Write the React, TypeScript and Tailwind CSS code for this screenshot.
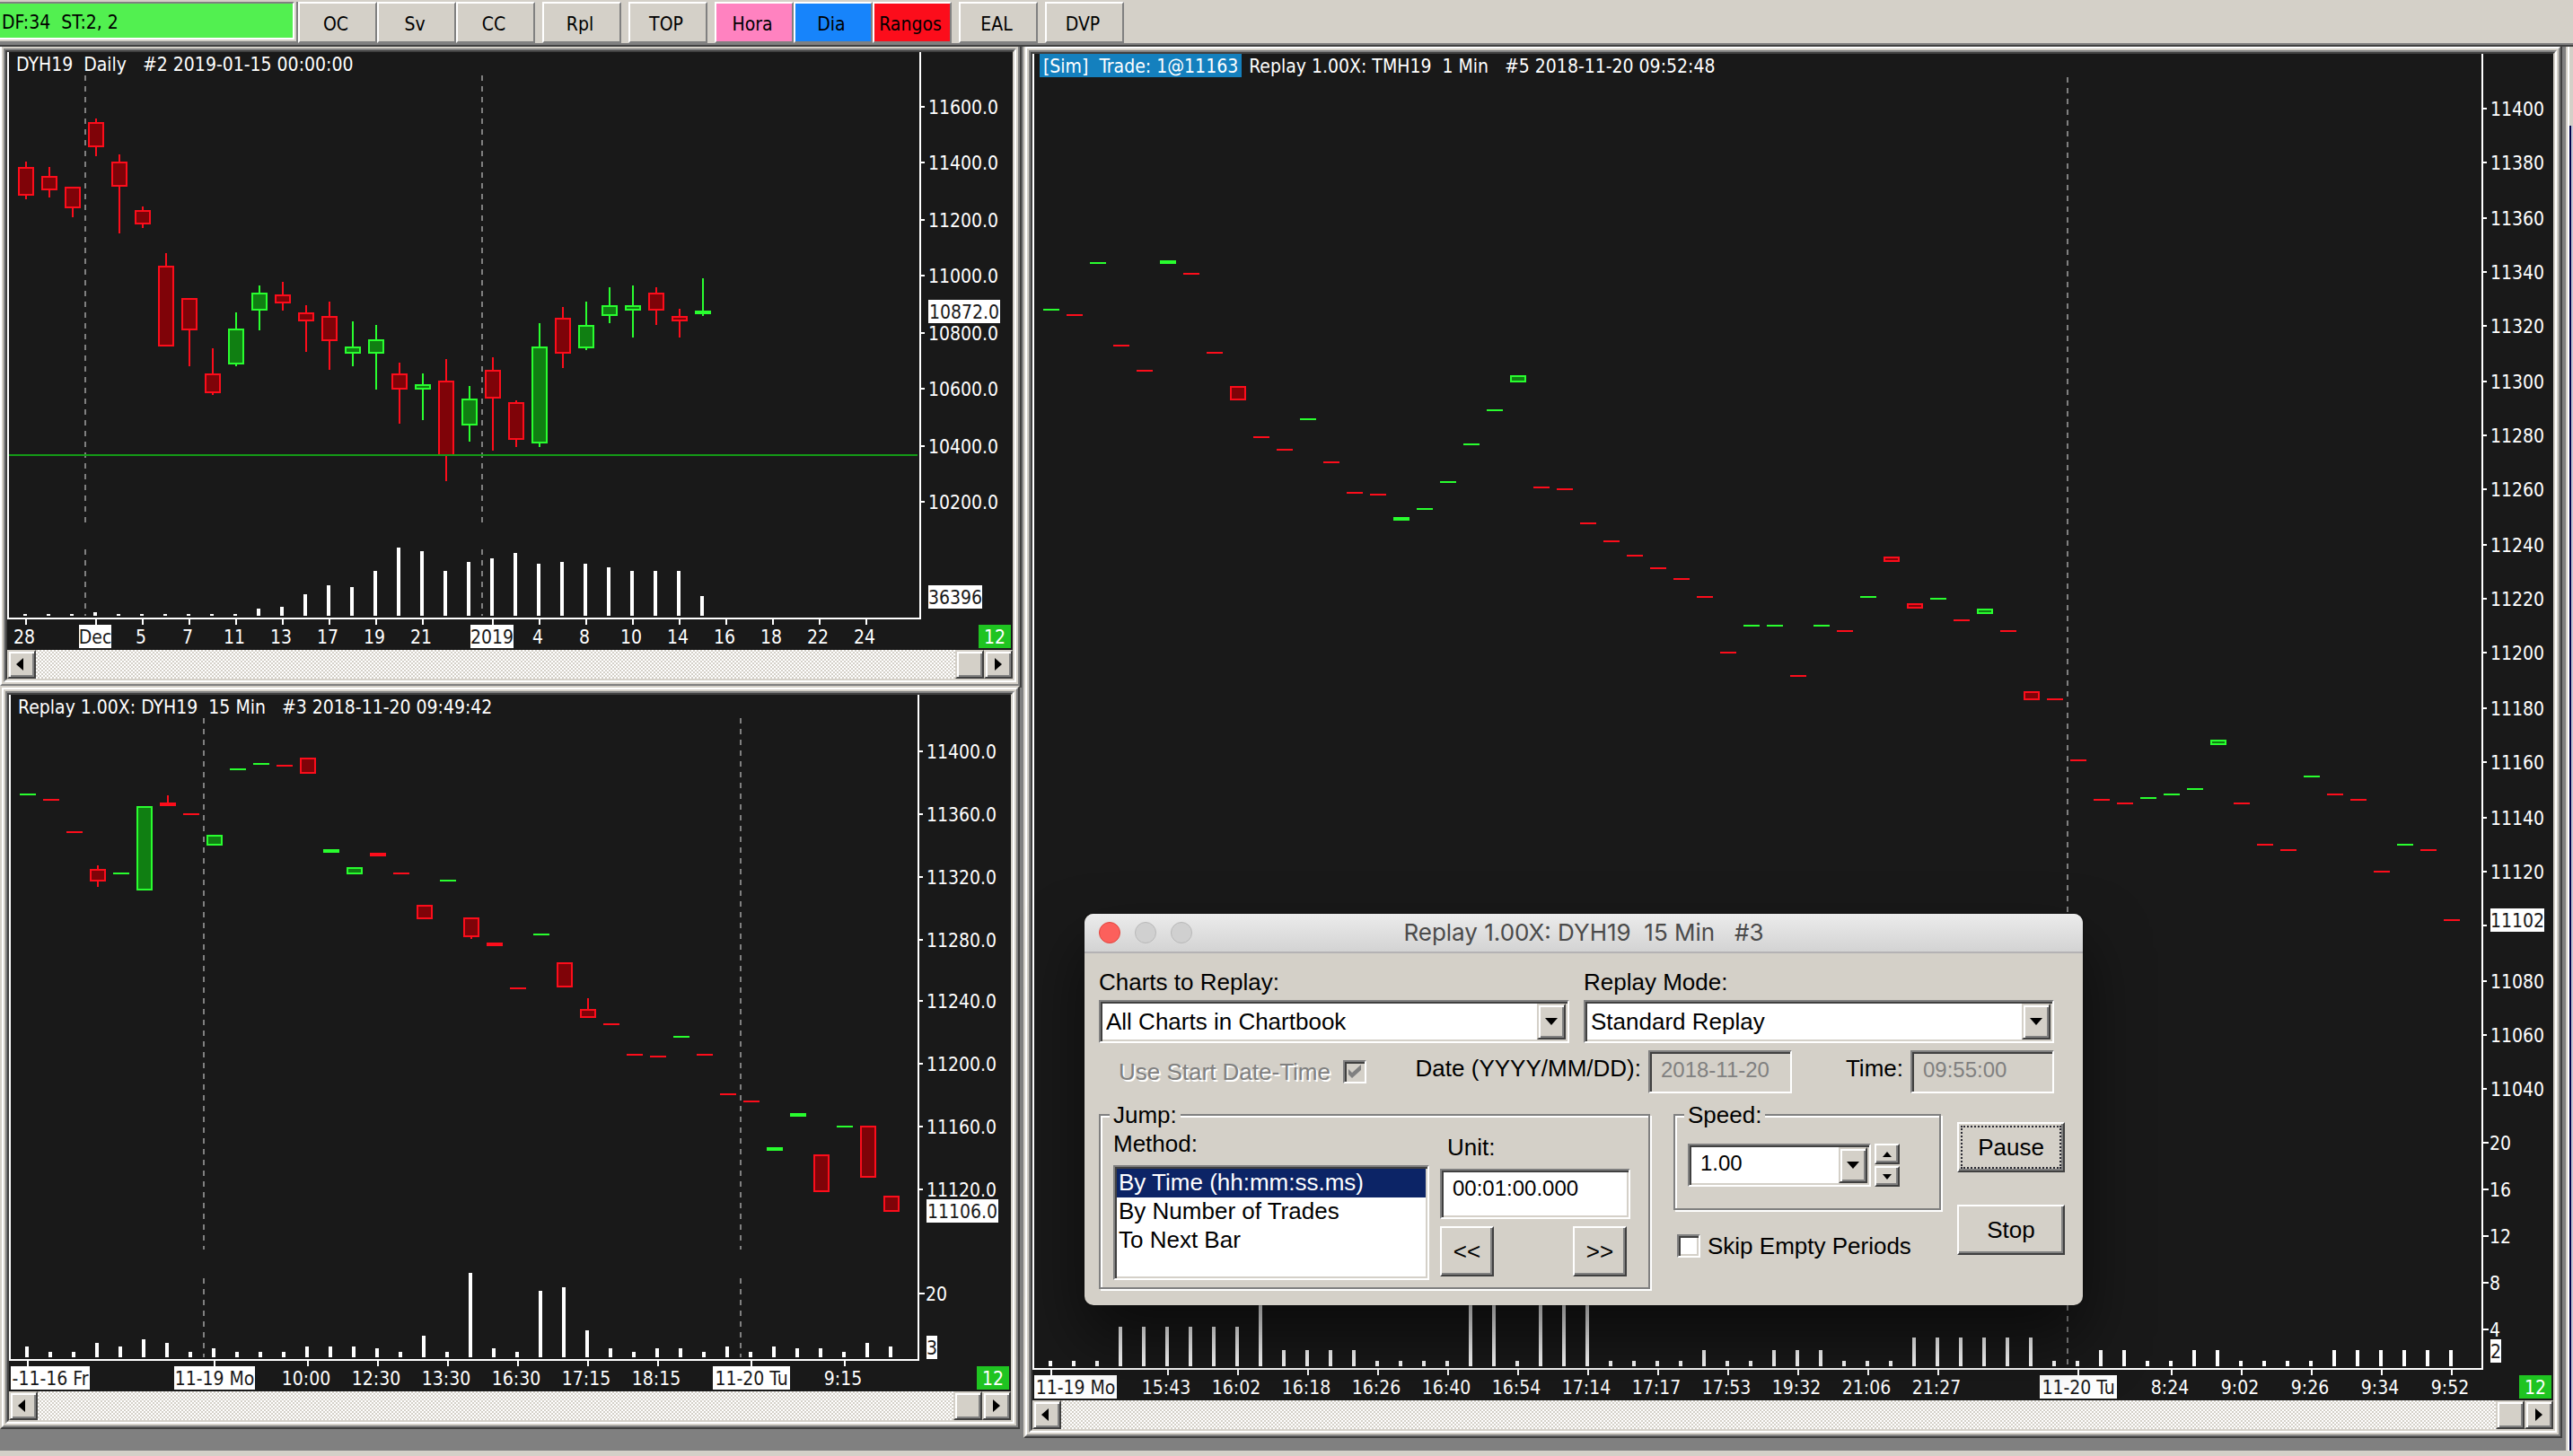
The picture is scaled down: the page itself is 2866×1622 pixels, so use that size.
import { ReactNode } from 'react'

type Candle = {
  up: boolean
  top: number
  bottom: number
  high?: number
  low?: number
}
type Label = { at: number; text: string; box?: [number, number] }
type ChartProps = {
  view: [number, number, number, number]
  candles: Candle[]
  first: number
  volumes: number[]
  axisX: number
  axisY: number
  dashes: [number, number, number][]
  prices: Label[]
  volumeTicks: Label[]
  priceBox: Label
  volumeBox: Label
  times: Label[]
  line?: number
  zoomBox: number
  name: string
}

const STEP = 26
const chartFont = "font-['DejaVu_Sans_Condensed','DejaVu_Sans',sans-serif] text-[21px]"
const dialogFont = "font-['Liberation_Sans',Arial,sans-serif]"

// win95 style bevels
const raised =
  'border-2 border-t-white border-l-white border-r-[#404040] border-b-[#404040] bg-[#d4d0c8] shadow-[inset_-2px_-2px_0_#808080]'
const raisedSoft =
  'border-2 border-t-[#d4d0c8] border-l-[#d4d0c8] border-r-[#404040] border-b-[#404040] bg-[#d4d0c8] shadow-[inset_2px_2px_0_#fff,inset_-2px_-2px_0_#808080]'
const sunken =
  'border-2 border-t-[#808080] border-l-[#808080] border-r-white border-b-white shadow-[inset_2px_2px_0_#404040,inset_-2px_-2px_0_#d4d0c8]'
const etched = 'border-2 border-[#808080] shadow-[2px_2px_0_#fff,inset_2px_2px_0_#fff]'

// body top, body bottom, high, low
const up = (top: number, bottom = top + 2, high?: number, low?: number): Candle => ({ up: true, top, bottom, high, low })
const dn = (top: number, bottom = top + 2, high?: number, low?: number): Candle => ({ up: false, top, bottom, high, low })

const daily: ChartProps = {
  name: 'DYH19 Daily',
  view: [8, 58, 1120, 666],
  first: 29,
  axisX: 1025,
  axisY: 689,
  line: 507,
  zoomBox: 1090,
  candles: [
    dn(186, 218, 180, 222), dn(196, 212, 186, 220), dn(208, 232, 208, 242), dn(136, 164, 132, 174),
    dn(180, 208, 172, 260), dn(234, 250, 230, 254), dn(296, 386, 282), dn(332, 368, 332, 408),
    dn(416, 438, 388, 440), up(366, 406, 348, 408), up(326, 346, 318, 368), dn(328, 338, 314, 346),
    dn(348, 358, 340, 392), dn(352, 380, 336, 412), up(386, 394, 358, 408), up(378, 394, 362, 434),
    dn(416, 434, 404, 472), up(428, 434, 416, 468), dn(424, 508, 400, 536), up(444, 474, 430, 492),
    dn(412, 444, 398, 502), dn(448, 490, 446, 498), up(386, 494, 360, 498), dn(354, 394, 342, 410),
    up(362, 388, 336, 390), up(340, 352, 320, 360), up(340, 346, 318, 376), dn(326, 346, 320, 362),
    dn(352, 358, 344, 376), up(346, 350, 310, 352),
  ],
  volumes: [
    684, 684, 684, 682, 684, 684, 684, 684, 684, 684, 678, 676, 662, 652, 654, 636, 610, 614, 636, 626, 622, 616, 628,
    626, 628, 632, 636, 636, 636, 664,
  ],
  dashes: [[95, 84, 582], [95, 612, 686], [537, 84, 582], [537, 612, 686]],
  prices: [
    { at: 119, text: '11600.0' }, { at: 181, text: '11400.0' }, { at: 245, text: '11200.0' }, { at: 307, text: '11000.0' },
    { at: 371, text: '10800.0' }, { at: 433, text: '10600.0' }, { at: 497, text: '10400.0' }, { at: 559, text: '10200.0' },
  ],
  volumeTicks: [],
  priceBox: { at: 334, text: '10872.0', box: [1034, 80] },
  volumeBox: { at: 652, text: '36396', box: [1034, 60] },
  times: [
    { at: 29, text: '28' }, { at: 107, text: 'Dec', box: [88, 36] }, { at: 159, text: '5' }, { at: 211, text: '7' },
    { at: 263, text: '11' }, { at: 315, text: '13' }, { at: 367, text: '17' }, { at: 419, text: '19' },
    { at: 471, text: '21' }, { at: 549, text: '2019', box: [524, 48] }, { at: 601, text: '4' }, { at: 653, text: '8' },
    { at: 705, text: '10' }, { at: 757, text: '14' }, { at: 809, text: '16' }, { at: 861, text: '18' },
    { at: 913, text: '22' }, { at: 965, text: '24' },
  ],
}

const quarter: ChartProps = {
  name: 'DYH19 15 Min',
  view: [10, 774, 1116, 776],
  first: 31,
  axisX: 1023,
  axisY: 1515,
  zoomBox: 1088,
  candles: [
    up(884), dn(890), dn(926), dn(968, 982, 964, 988), up(972), up(898, 992), dn(894, 898, 886), dn(906),
    up(930, 942), up(856), up(850), dn(852), dn(844, 862), up(946, 950), up(966, 974), dn(950, 954),
    dn(972), dn(1008, 1024), up(980), dn(1022, 1044, 1022, 1046), dn(1050, 1054), dn(1100), up(1040),
    dn(1072, 1100), dn(1124, 1134, 1112), dn(1140), dn(1174), dn(1176), up(1154), dn(1174), dn(1218), dn(1226),
    up(1278, 1282), up(1240, 1244), dn(1286, 1328), up(1254), dn(1254, 1312), dn(1332, 1350),
  ],
  volumes: [
    1500, 1506, 1506, 1496, 1500, 1492, 1496, 1506, 1502, 1506, 1506, 1506, 1500, 1500, 1500, 1502, 1506, 1488, 1506,
    1418, 1502, 1506, 1438, 1434, 1482, 1502, 1506, 1502, 1502, 1506, 1500, 1506, 1500, 1502, 1502, 1506, 1496, 1500,
  ],
  dashes: [[227, 800, 1392], [227, 1424, 1512], [825, 800, 1392], [825, 1424, 1512]],
  prices: [
    { at: 837, text: '11400.0' }, { at: 907, text: '11360.0' }, { at: 977, text: '11320.0' }, { at: 1047, text: '11280.0' },
    { at: 1115, text: '11240.0' }, { at: 1185, text: '11200.0' }, { at: 1255, text: '11160.0' }, { at: 1325, text: '11120.0' },
  ],
  volumeTicks: [{ at: 1441, text: '20' }],
  priceBox: { at: 1336, text: '11106.0', box: [1032, 80] },
  volumeBox: { at: 1488, text: '3', box: [1032, 12] },
  times: [
    { at: 31, text: '-11-16 Fr', box: [12, 88] }, { at: 239, text: '11-19 Mo', box: [194, 90] }, { at: 343, text: '10:00' },
    { at: 421, text: '12:30' }, { at: 499, text: '13:30' }, { at: 577, text: '16:30' }, { at: 655, text: '17:15' },
    { at: 733, text: '18:15' }, { at: 837, text: '11-20 Tu', box: [794, 86] }, { at: 941, text: '9:15' },
  ],
}

const minute: ChartProps = {
  name: 'TMH19 1 Min',
  view: [1150, 60, 1694, 1500],
  first: 1171,
  axisX: 2765,
  axisY: 1525,
  zoomBox: 2806,
  candles: [
    up(344), dn(350), up(292), dn(384), dn(412), up(290, 294), dn(304), dn(392), dn(430, 446), dn(486), dn(500),
    up(466), dn(514), dn(548), dn(550), up(576, 580), up(566), up(536), up(494), up(456), up(418, 426), dn(542),
    dn(544), dn(582), dn(602), dn(618), dn(632), dn(644), dn(664), dn(726), up(696), up(696), dn(752), up(696),
    dn(702), up(664), dn(620, 626), dn(672, 678), up(666), dn(690), up(678, 684), dn(702), dn(770, 780), dn(778),
    dn(846), dn(890), dn(894), up(888), up(884), up(878), up(824, 830), dn(894), dn(940), dn(946), up(864),
    dn(884), dn(890), dn(970), up(940), dn(946), dn(1024),
  ],
  volumes: [
    1516, 1516, 1516, 1478, 1478, 1478, 1478, 1478, 1478, 1440, 1504, 1504, 1504, 1504, 1516, 1516, 1516, 1516, 1440,
    1440, 1516, 1440, 1440, 1440, 1516, 1516, 1516, 1516, 1504, 1516, 1516, 1504, 1504, 1504, 1516, 1516, 1516, 1490,
    1490, 1490, 1490, 1490, 1490, 1516, 1516, 1504, 1504, 1516, 1516, 1504, 1504, 1516, 1516, 1516, 1516, 1504, 1504,
    1504, 1504, 1504, 1504,
  ],
  dashes: [[2303, 86, 1522]],
  prices: [
    { at: 121, text: '11400' }, { at: 181, text: '11380' }, { at: 243, text: '11360' }, { at: 303, text: '11340' },
    { at: 363, text: '11320' }, { at: 425, text: '11300' }, { at: 485, text: '11280' }, { at: 545, text: '11260' },
    { at: 607, text: '11240' }, { at: 667, text: '11220' }, { at: 727, text: '11200' }, { at: 789, text: '11180' },
    { at: 849, text: '11160' }, { at: 911, text: '11140' }, { at: 971, text: '11120' }, { at: 1031, text: '' },
    { at: 1093, text: '11080' }, { at: 1153, text: '11060' }, { at: 1213, text: '11040' },
  ],
  volumeTicks: [
    { at: 1273, text: '20' }, { at: 1325, text: '16' }, { at: 1377, text: '12' }, { at: 1429, text: '8' }, { at: 1481, text: '4' },
  ],
  priceBox: { at: 1012, text: '11102', box: [2774, 60] },
  volumeBox: { at: 1492, text: '2', box: [2774, 12] },
  times: [
    { at: 1171, text: '11-19 Mo', box: [1152, 92] }, { at: 1301, text: '15:43' }, { at: 1379, text: '16:02' },
    { at: 1457, text: '16:18' }, { at: 1535, text: '16:26' }, { at: 1613, text: '16:40' }, { at: 1691, text: '16:54' },
    { at: 1769, text: '17:14' }, { at: 1847, text: '17:17' }, { at: 1925, text: '17:53' }, { at: 2003, text: '19:32' },
    { at: 2081, text: '21:06' }, { at: 2159, text: '21:27' }, { at: 2315, text: '11-20 Tu', box: [2272, 86] },
    { at: 2419, text: '8:24' }, { at: 2497, text: '9:02' }, { at: 2575, text: '9:26' }, { at: 2653, text: '9:34' },
    { at: 2731, text: '9:52' },
  ],
}

function Tag({ x, y, width, text, green }: { x: number; y: number; width: number; text: string; green?: boolean }) {
  return (
    <g>
      <rect x={x} y={y} width={width} height={26} fill={green ? '#1fc421' : '#fff'} />
      <text x={x + width / 2} y={y + 21} textAnchor="middle" fill={green ? '#fff' : '#191919'}>{text}</text>
    </g>
  )
}

function Chart(c: ChartProps) {
  const [left, top] = c.view
  return (
    <svg viewBox={c.view.join(' ')} className={`block h-auto w-full bg-[#191919] ${chartFont}`} shapeRendering="crispEdges" role="img" aria-label={c.name}>
      {c.dashes.map(([x, y1, y2]) => (
        <line key={`${x}-${y1}`} x1={x} x2={x} y1={y1} y2={y2} stroke="#808080" strokeWidth={2} strokeDasharray="6 6" />
      ))}
      {c.candles.map((k, i) => {
        const x = c.first + i * STEP
        const stroke = k.up ? '#29fd2f' : '#fc0d1b'
        return (
          <g key={i}>
            <rect x={x - 1} y={k.high ?? k.top} width={2} height={(k.low ?? k.bottom) - (k.high ?? k.top)} fill={stroke} />
            <rect x={x - 9} y={k.top} width={18} height={k.bottom - k.top} fill={stroke} />
            {k.bottom - k.top > 4 && (
              <rect x={x - 7} y={k.top + 2} width={14} height={k.bottom - k.top - 4} fill={k.up ? '#107f12' : '#7f0308'} />
            )}
          </g>
        )
      })}
      {c.volumes.map((v, i) => (
        <rect key={i} x={c.first + i * STEP - 3} y={v} width={4} height={c.axisY - 3 - v} fill="#fff" />
      ))}
      {c.line && <rect x={left + 2} y={c.line - 1} width={c.axisX - left - 5} height={2} fill="#149a17" />}

      <path
        d={`M${left + 1} ${top}V${c.axisY}H${c.axisX}V${top}`}
        fill="none"
        stroke="#fff"
        strokeWidth={2}
      />
      <g fill="#fff">
        {c.prices.map((p) => (
          <g key={p.at}>
            <rect x={c.axisX + 1} y={p.at - 1} width={4} height={2} />
            <text x={c.axisX + 9} y={p.at + 8}>{p.text}</text>
          </g>
        ))}
        {c.volumeTicks.map((p) => (
          <g key={p.at}>
            <rect x={c.axisX + 1} y={p.at - 1} width={6} height={2} />
            <text x={c.axisX + 8} y={p.at + 8}>{p.text}</text>
          </g>
        ))}
        {c.times.map((t) => (
          <g key={t.at}>
            <rect x={t.at - 1} y={c.axisY + 1} width={2} height={6} />
            {!t.box && <text x={t.at - 2} y={c.axisY + 28} textAnchor="middle">{t.text}</text>}
          </g>
        ))}
      </g>
      {c.times.map((t) => t.box && <Tag key={t.at} x={t.box[0]} y={c.axisY + 7} width={t.box[1]} text={t.text} />)}
      {[c.priceBox, c.volumeBox].map((b) => b.box && <Tag key={b.at} x={b.box[0]} y={b.at} width={b.box[1]} text={b.text} />)}
      <Tag x={c.zoomBox} y={c.axisY + 7} width={36} text="12" green />
    </svg>
  )
}

function ScrollBar() {
  return (
    <div className="flex h-8 bg-[repeating-conic-gradient(#fff_0_25%,#d4d0c8_0_50%)] bg-[length:4px_4px]">
      <button aria-label="Scroll left" className={`flex w-8 items-center justify-center pr-1 ${raisedSoft}`}>
        <svg width="8" height="14" viewBox="0 0 8 14"><path d="M8 0v14L0 7z" /></svg>
      </button>
      <div className={`ml-auto w-8 ${raisedSoft}`} />
      <button aria-label="Scroll right" className={`flex w-8 items-center justify-center ${raisedSoft}`}>
        <svg width="8" height="14" viewBox="0 0 8 14"><path d="M0 0v14l8-7z" /></svg>
      </button>
    </div>
  )
}

function ChartWindow({ chart, title, className = '' }: { chart: ChartProps; title: ReactNode; className?: string }) {
  return (
    <section className={`border-2 border-t-[#d4d0c8] border-r-[#404040] border-b-[#404040] border-l-[#d4d0c8] ${className}`}>
      <div className="border-2 border-t-white border-r-[#808080] border-b-[#808080] border-l-white">
        <div className="border-2 border-[#d4d0c8]">
          <div className="border-2 border-t-[#808080] border-r-white border-b-white border-l-[#808080]">
            <div className="relative border-2 border-t-[#404040] border-r-[#d4d0c8] border-b-[#d4d0c8] border-l-[#404040]">
              <h2 className={`absolute top-0 left-2 flex h-[26px] whitespace-pre leading-[28px] text-white ${chartFont}`}>{title}</h2>
              <Chart {...chart} />
              <ScrollBar />
            </div>
          </div>
        </div>
      </div>
    </section>
  )
}

function ToolButton({ text, className = 'bg-[#d4d0c8]' }: { text: string; className?: string }) {
  return (
    <button className={`h-[46px] w-[88px] border-2 border-t-white border-r-[#808080] border-b-[#808080] border-l-white pt-1 pr-1 text-center leading-[26px] ${className}`}>
      {text}
    </button>
  )
}

function Toolbar() {
  return (
    <header className={`flex border-b-2 border-[#404040] bg-[#d4d0c8] text-black ${chartFont}`}>
      <div className="flex grow gap-2 border-b-2 border-[#808080] pt-0.5">
        <div className="flex">
          <div className="h-[46px] w-[332px] border-r-2 border-b-2 border-[#808080] pr-0.5 pb-0.5">
            <p className="h-full border-t-2 border-r-2 border-b-2 border-t-[#808080] border-r-white border-b-white bg-[#52f050] pt-2 pl-0.5 leading-[26px] whitespace-pre">
              {'DF:34  ST:2, 2'}
            </p>
          </div>
          <ToolButton text="OC" />
          <ToolButton text="Sv" />
          <ToolButton text="CC" />
        </div>
        <ToolButton text="Rpl" />
        <ToolButton text="TOP" />
        <div className="flex">
          <ToolButton text="Hora" className="bg-[#ff82c0]" />
          <ToolButton text="Dia" className="bg-[#1784fb]" />
          <ToolButton text="Rangos" className="bg-[#fc0d1b]" />
        </div>
        <ToolButton text="EAL" />
        <ToolButton text="DVP" />
      </div>
    </header>
  )
}

function Dropdown({ id, value, className = '' }: { id: string; value: string; className?: string }) {
  return (
    <div className="relative">
      <select id={id} className={`block h-12 w-full appearance-none bg-white pl-1.5 ${sunken} ${className}`}>
        <option>{value}</option>
      </select>
      <span className={`pointer-events-none absolute inset-y-1 right-1 flex w-8 items-center justify-center ${raisedSoft}`}>
        <svg width="14" height="8" viewBox="0 0 14 8"><path d="M0 0h14L7 8z" /></svg>
      </span>
    </div>
  )
}

function ReplayDialog() {
  return (
    <div
      role="dialog"
      aria-labelledby="dialog-title"
      className={`absolute top-[966px] left-[1208px] w-[1112px] overflow-hidden rounded-[10px] bg-[#d4d0c8] text-[26px] leading-8 text-black shadow-[0_36px_70px_rgba(0,0,0,0.55),0_0_2px_rgba(0,0,0,0.6)] ${dialogFont}`}
    >
      <div className="relative flex h-11 items-center gap-4 border-b-2 border-[#b4b2b4] bg-gradient-to-b from-[#ececec] to-[#d3d3d3] pl-4">
        <button aria-label="Close" className="size-6 rounded-full border border-[#e2463f] bg-[#fc605c]" />
        <button aria-label="Minimize" className="size-6 rounded-full border border-[#b9b9b9] bg-[#d0d0d0]" />
        <button aria-label="Zoom" className="size-6 rounded-full border border-[#b9b9b9] bg-[#d0d0d0]" />
        <h2 id="dialog-title" className="pointer-events-none absolute inset-x-0 text-center font-[Inter,Roboto,sans-serif] whitespace-pre text-[#4b4b4b]">
          {'Replay 1.00X: DYH19  15 Min   #3'}
        </h2>
      </div>

      <form className="pt-4 pb-[18px] pl-4">
        <div className="grid grid-cols-2 gap-4 pr-8">
          <div className="flex flex-col gap-1">
            <label htmlFor="charts">Charts to Replay:</label>
            <Dropdown id="charts" value="All Charts in Chartbook" />
          </div>
          <div className="flex flex-col gap-1">
            <label htmlFor="mode">Replay Mode:</label>
            <Dropdown id="mode" value="Standard Replay" />
          </div>
        </div>

        <div className="mt-2 flex h-12 items-center pr-8">
          <label htmlFor="use-start" className="ml-5.5 text-[#808080] [text-shadow:2px_2px_0_#fff]">Use Start Date-Time</label>
          <span className="relative ml-3.5 size-[26px]">
            <input id="use-start" type="checkbox" defaultChecked disabled className={`block size-full appearance-none ${sunken}`} />
            <svg className="pointer-events-none absolute inset-0" width="26" height="26" viewBox="0 0 26 26">
              <path d="M6 10v6l4 4 10-9V5l-10 9z" fill="#808080" />
            </svg>
          </span>
          <label htmlFor="date" className="ml-auto pb-2">Date (YYYY/MM/DD):</label>
          <input id="date" disabled defaultValue="2018-11-20" className={`ml-2 h-12 w-40 pl-3 pb-1 text-2xl text-[#808080] ${sunken}`} />
          <label htmlFor="time" className="ml-15 pb-2">Time:</label>
          <input id="time" disabled defaultValue="09:55:00" className={`ml-2 h-12 w-40 pl-3 pb-1 text-2xl text-[#808080] ${sunken}`} />
        </div>

        <div className="mt-2 flex">
          <fieldset className={`flex w-[614px] pb-2 pl-3.5 ${etched}`}>
            <legend className="bg-[#d4d0c8] px-1 -ml-1">Jump:</legend>
            <div className="flex gap-3">
              <div className="w-[352px]">
                <label htmlFor="method" className="block">Method:</label>
                <select id="method" size={4} defaultValue="time" className={`mt-2 block h-32 w-full appearance-none overflow-hidden bg-white p-0.5 ${sunken}`}>
                  <option value="time" className="h-8 p-0 pl-0.5 leading-8 checked:bg-[linear-gradient(#0c2466,#0c2466)] checked:[-webkit-text-fill-color:#fff]">By Time (hh:mm:ss.ms)</option>
                  <option value="trades" className="h-8 p-0 pl-0.5 leading-8">By Number of Trades</option>
                  <option value="bar" className="h-8 p-0 pl-0.5 leading-8">To Next Bar</option>
                </select>
              </div>
              <div className="w-[212px] pt-1">
                <label htmlFor="unit" className="block pl-2">Unit:</label>
                <input id="unit" defaultValue="00:01:00.000" className={`mt-2 block h-14 w-full bg-white pl-3 pb-3 text-2xl ${sunken}`} />
                <div className="mt-2 flex justify-between pr-1">
                  <button type="button" className={`h-14 w-15 ${raised}`}>&lt;&lt;</button>
                  <button type="button" className={`h-14 w-15 ${raised}`}>&gt;&gt;</button>
                </div>
              </div>
            </div>
          </fieldset>

          <div className="ml-[26px] w-[298px]">
            <fieldset className={`pb-6 pl-3.5 ${etched}`}>
              <legend className="bg-[#d4d0c8] px-1 -ml-1">
                <label htmlFor="speed">Speed:</label>
              </legend>
              <div className="mt-4 flex gap-1">
                <div className="w-[204px]">
                  <Dropdown id="speed" value="1.00" className="pb-1 pl-3 text-2xl" />
                </div>
                <div className="flex w-7 flex-col gap-0.5">
                  <button type="button" aria-label="Faster" className={`flex h-[23px] items-center justify-center ${raised}`}>
                    <svg width="10" height="6" viewBox="0 0 10 6"><path d="M5 0l5 6H0z" /></svg>
                  </button>
                  <button type="button" aria-label="Slower" className={`flex h-[23px] items-center justify-center ${raised}`}>
                    <svg width="10" height="6" viewBox="0 0 10 6"><path d="M0 0h10L5 6z" /></svg>
                  </button>
                </div>
              </div>
            </fieldset>
            <div className="mt-6 flex items-center gap-2 pl-1">
              <input id="skip" type="checkbox" className={`size-[26px] appearance-none bg-white ${sunken}`} />
              <label htmlFor="skip">Skip Empty Periods</label>
            </div>
          </div>

          <div className="ml-[18px] flex w-[120px] flex-col gap-9 pt-6">
            <button type="button" className={`h-14 p-0.5 ${raised}`}>
              <span className="flex h-full items-center justify-center border-2 border-dotted border-[#2a2a33]">Pause</span>
            </button>
            <button type="button" className={`h-14 ${raised}`}>Stop</button>
          </div>
        </div>
      </form>
    </div>
  )
}

export default function App() {
  return (
    <div className="flex min-h-screen flex-col bg-[#d4d0c8]">
      <Toolbar />
      <main className="relative grid grow grid-cols-[minmax(0,1140fr)_minmax(0,1718fr)_8px] items-start overflow-hidden bg-[#808080]">
        <div>
          <ChartWindow
            chart={daily}
            title={<span className="pl-0.5">{'DYH19  Daily   #2 2019-01-15 00:00:00'}</span>}
            className="-mt-1 mr-0.5 -mb-0.5 -ml-0.5"
          />
          <ChartWindow
            chart={quarter}
            title={<span className="pl-0.5">{'Replay 1.00X: DYH19  15 Min   #3 2018-11-20 09:49:42'}</span>}
            className="relative mr-1"
          />
        </div>
        <ChartWindow
          chart={minute}
          title={
            <>
              <span className="mr-2 bg-[#1480be] px-1">{'[Sim]  Trade: 1@11163'}</span>
              <span>{'Replay 1.00X: TMH19  1 Min   #5 2018-11-20 09:52:48'}</span>
            </>
          }
          className="-mt-0.5 mr-1 mb-3.5"
        />
        <div className="flex self-stretch border-l-2 border-[#d4d0c8] bg-white pl-0.5">
          <div className="w-full border-t-[88px] border-t-[#d4d0c8] bg-[#c3c6d6]">
            <div className="h-full w-0.5 bg-[#02024a]" />
          </div>
        </div>
        <ReplayDialog />
      </main>
      <footer className="h-1.5" />
    </div>
  )
}
